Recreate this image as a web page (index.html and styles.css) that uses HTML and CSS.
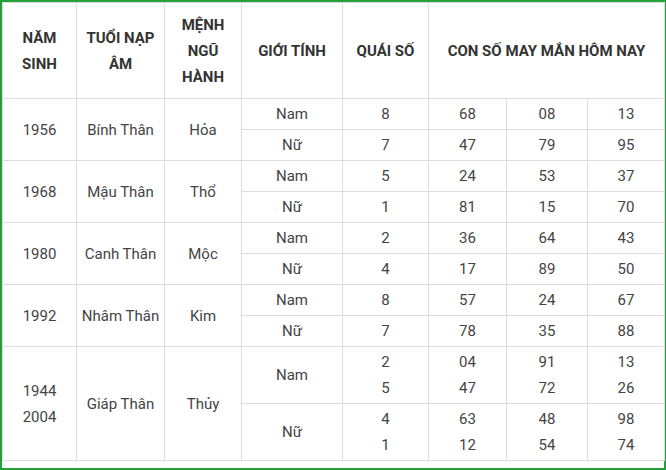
FILE: index.html
```html
<!DOCTYPE html>
<html lang="vi">
<head>
<meta charset="utf-8">
<link rel="stylesheet" href="styles.css">
</head>
<body>
<div class="frame">
<table class="luck">
<colgroup>
<col class="c1"><col class="c2"><col class="c3"><col class="c4"><col class="c5"><col class="c6"><col class="c7"><col class="c8">
</colgroup>
<thead>
<tr class="head">
<th>NĂM<br>SINH</th>
<th>TUỔI NẠP<br>ÂM</th>
<th>MỆNH<br>NGŨ<br>HÀNH</th>
<th>GIỚI TÍNH</th>
<th>QUÁI SỐ</th>
<th colspan="3">CON SỐ MAY MẮN HÔM NAY</th>
</tr>
</thead>
<tbody>
<tr class="sub"><td rowspan="2">1956</td><td rowspan="2">Bính Thân</td><td rowspan="2">Hỏa</td><td>Nam</td><td>8</td><td>68</td><td>08</td><td>13</td></tr>
<tr class="sub"><td>Nữ</td><td>7</td><td>47</td><td>79</td><td>95</td></tr>
<tr class="sub"><td rowspan="2">1968</td><td rowspan="2">Mậu Thân</td><td rowspan="2">Thổ</td><td>Nam</td><td>5</td><td>24</td><td>53</td><td>37</td></tr>
<tr class="sub"><td>Nữ</td><td>1</td><td>81</td><td>15</td><td>70</td></tr>
<tr class="sub"><td rowspan="2">1980</td><td rowspan="2">Canh Thân</td><td rowspan="2">Mộc</td><td>Nam</td><td>2</td><td>36</td><td>64</td><td>43</td></tr>
<tr class="sub"><td>Nữ</td><td>4</td><td>17</td><td>89</td><td>50</td></tr>
<tr class="sub"><td rowspan="2">1992</td><td rowspan="2">Nhâm Thân</td><td rowspan="2">Kim</td><td>Nam</td><td>8</td><td>57</td><td>24</td><td>67</td></tr>
<tr class="sub"><td>Nữ</td><td>7</td><td>78</td><td>35</td><td>88</td></tr>
<tr class="tall"><td rowspan="2">1944<br>2004</td><td rowspan="2">Giáp Thân</td><td rowspan="2">Thủy</td><td>Nam</td><td>2<br>5</td><td>04<br>47</td><td>91<br>72</td><td>13<br>26</td></tr>
<tr class="tall"><td>Nữ</td><td>4<br>1</td><td>63<br>12</td><td>48<br>54</td><td>98<br>74</td></tr>
</tbody>
</table>
</div>
</body>
</html>
```
FILE: styles.css
```css
html, body {
  margin: 0;
  padding: 0;
  background: #ffffff;
}
.frame {
  width: 666px;
  height: 470px;
  box-sizing: border-box;
  border: 2px solid #23a03a;
  background: #ffffff;
}
.luck {
  width: 100%;
  table-layout: fixed;
  border-collapse: collapse;
  font-family: Roboto, "Liberation Sans", sans-serif;
  font-size: 15px;
  line-height: 26px;
  color: #444444;
  text-align: center;
}
.c1 { width: 74px; }
.c2 { width: 88px; }
.c3 { width: 77px; }
.c4 { width: 101px; }
.c5 { width: 86px; }
.c6 { width: 78px; }
.c7 { width: 81px; }
.c8 { width: 77px; }
.luck th,
.luck td {
  border: 1px solid #dddddd;
  padding: 0;
  vertical-align: middle;
}
.luck th {
  font-weight: 700;
  color: #333333;
}
.head { height: 96px; }
.sub { height: 31px; }
.tall { height: 57px; }
```
